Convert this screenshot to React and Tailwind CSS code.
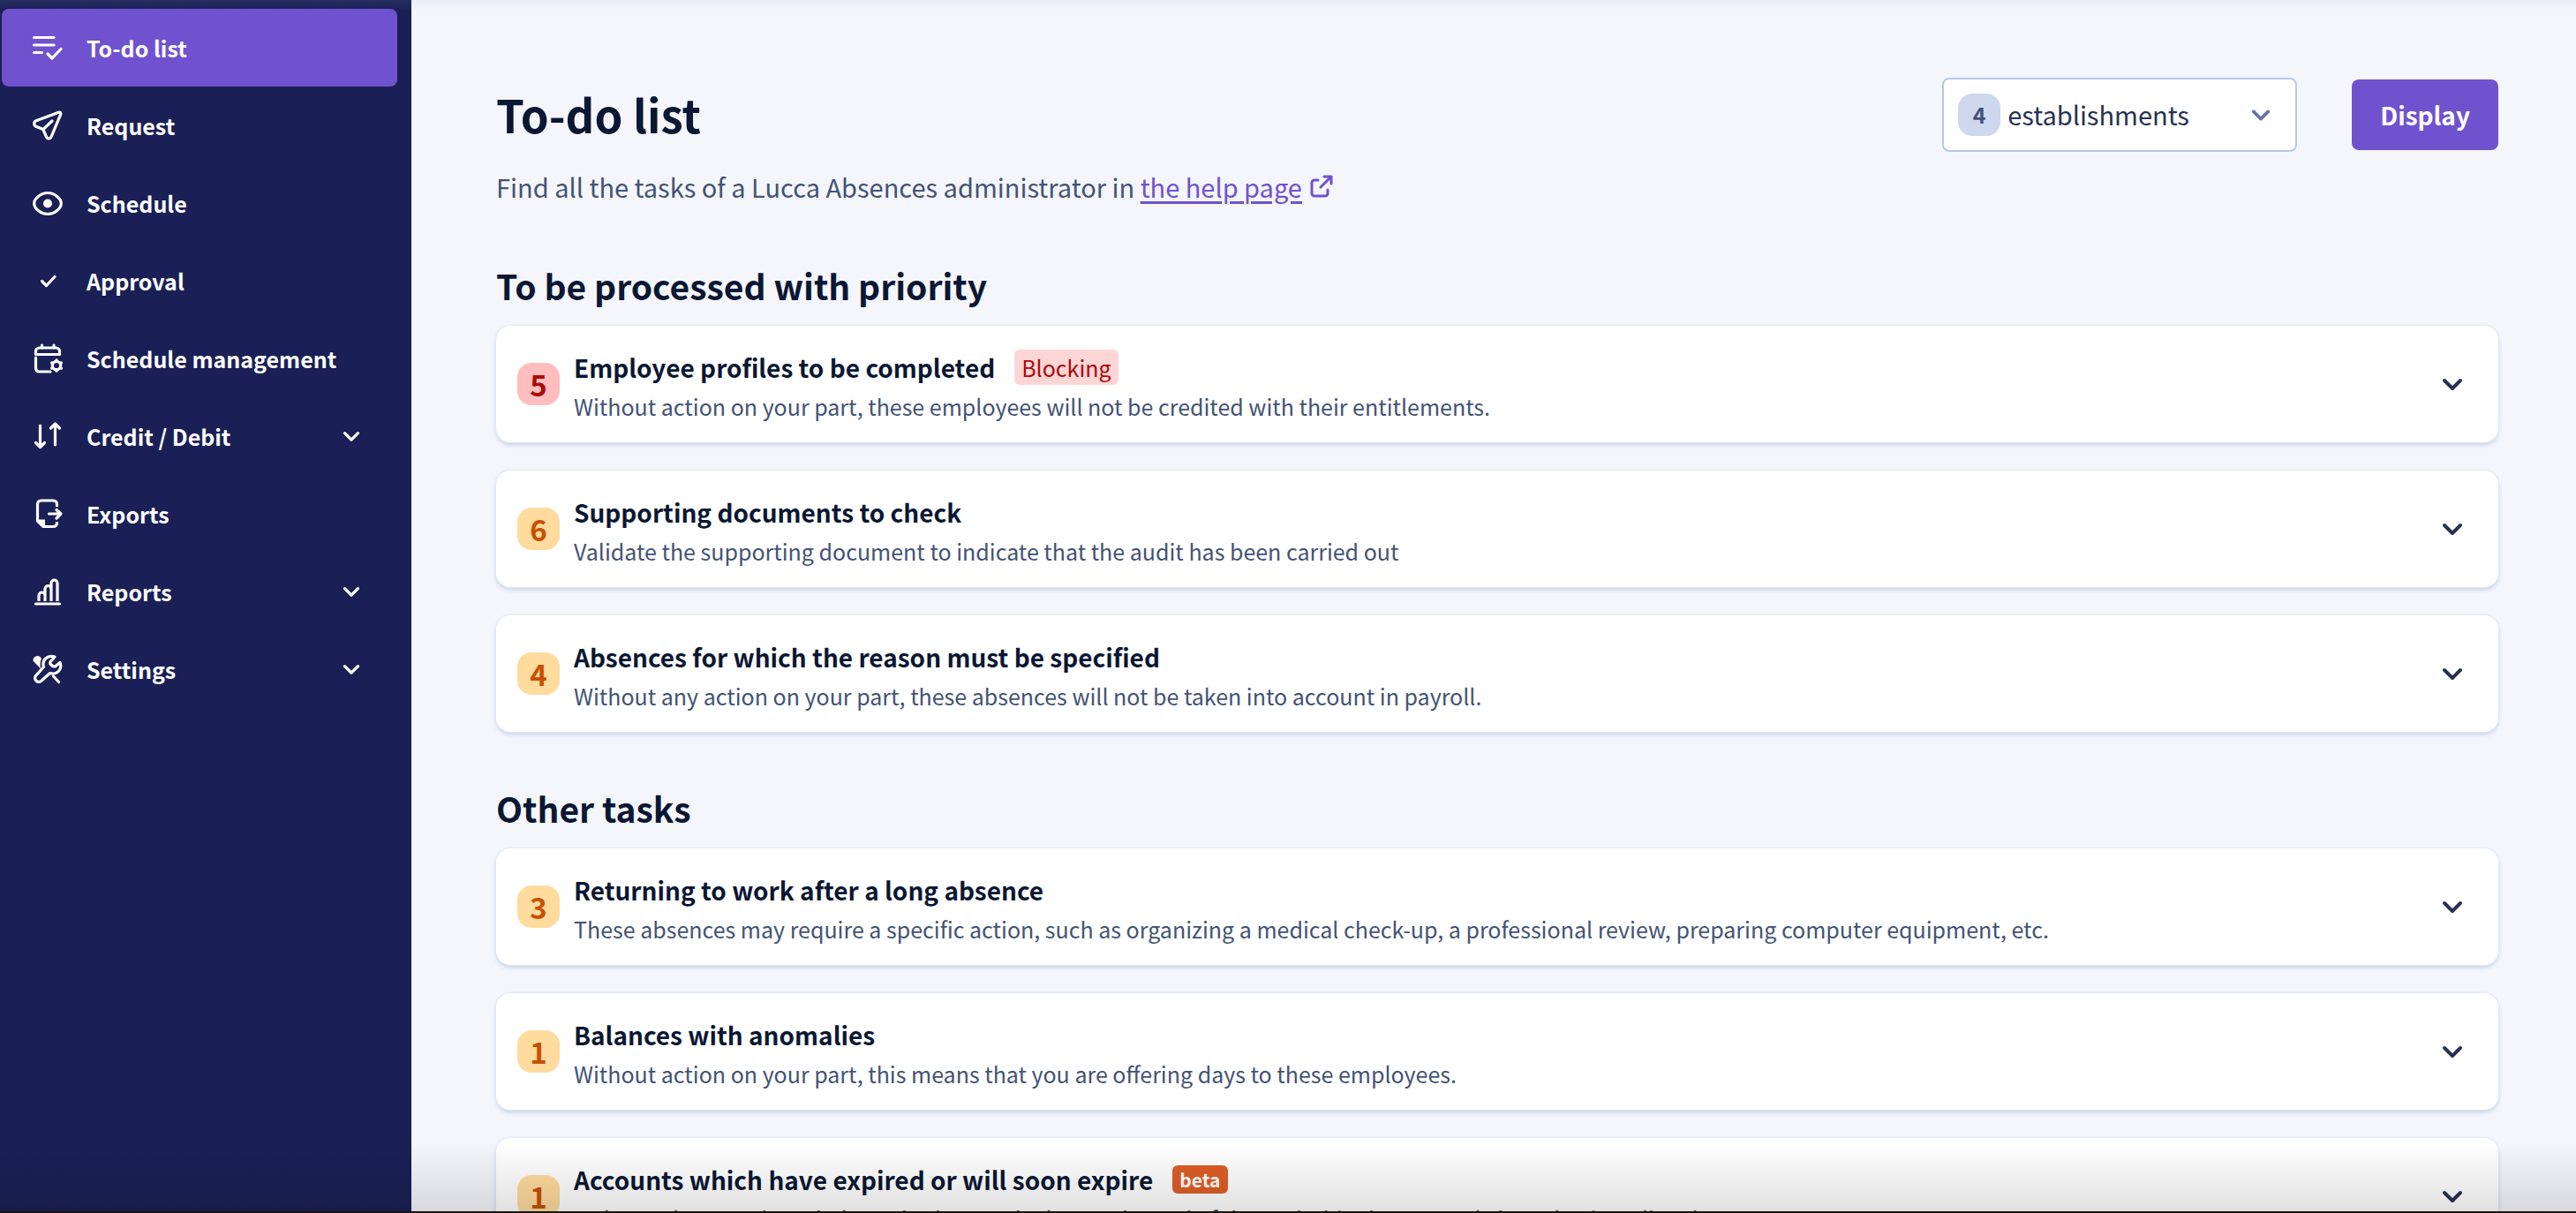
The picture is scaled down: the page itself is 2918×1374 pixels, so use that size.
import { useState } from 'react';

const navItems = [
  { label: 'To-do list', icon: 'todo', active: true },
  { label: 'Request', icon: 'send' },
  { label: 'Schedule', icon: 'eye' },
  { label: 'Approval', icon: 'check' },
  { label: 'Schedule management', icon: 'calendar' },
  { label: 'Credit / Debit', icon: 'arrows', expandable: true },
  { label: 'Exports', icon: 'export' },
  { label: 'Reports', icon: 'chart', expandable: true },
  { label: 'Settings', icon: 'tools', expandable: true }
];

const priorityTasks = [
  {
    count: 5,
    title: 'Employee profiles to be completed',
    text: 'Without action on your part, these employees will not be credited with their entitlements.',
    tag: 'Blocking'
  },
  {
    count: 6,
    title: 'Supporting documents to check',
    text: 'Validate the supporting document to indicate that the audit has been carried out'
  },
  {
    count: 4,
    title: 'Absences for which the reason must be specified',
    text: 'Without any action on your part, these absences will not be taken into account in payroll.'
  }
];

const otherTasks = [
  {
    count: 3,
    title: 'Returning to work after a long absence',
    text: 'These absences may require a specific action, such as organizing a medical check-up, a professional review, preparing computer equipment, etc.'
  },
  {
    count: 1,
    title: 'Balances with anomalies',
    text: 'Without action on your part, this means that you are offering days to these employees.'
  },
  {
    count: 1,
    title: 'Accounts which have expired or will soon expire',
    text: 'Only employees whose balance is about to be lost at the end of the period (or has recently been lost) are listed.',
    beta: true
  }
];

// Every icon is drawn on a 40x40 grid
const iconPaths = {
  todo: (
    <>
      <path d="M4.500 8.500h22.500M4.500 17h22.500M4.500 25.500h9" />
      <path d="m20 27 5 5 10-10.500" />
    </>
  ),
  send: (
    <>
      <path d="M32.500 5.200 7 14.800c-3 1.200-3 5.200-.2 6.500l8 3.200 3.600 8.300c1.200 2.800 4.800 2.600 5.800-.1l10.500-25c.6-1.600-.7-3.100-2.200-2.500Z" />
      <path d="m15 24.500 10-9.500" />
    </>
  ),
  eye: (
    <>
      <path d="M20 8.500c8 0 15.300 6.500 15.300 12s-7.300 12-15.300 12-15.300-6.500-15.300-12S12 8.500 20 8.500Z" />
      <circle cx="20" cy="20.500" r="5" fill="currentColor" stroke="none" />
    </>
  ),
  check: <path d="m13.500 20.500 5 5 9.500-10" />,
  calendar: (
    <>
      <path d="M6.500 15.500V12a4 4 0 0 1 4-4h19a4 4 0 0 1 4 4v3.500Z" />
      <path d="M6.500 19v12a4 4 0 0 0 4 4H23M13.500 5v3M27 5v3" />
      <circle cx="30" cy="28" r="4.700" />
      <path d="M30 21.800v1M30 33.200v1M24.600 24.900l1 .6M34.400 30.500l1 .6M24.600 31.100l1-.6M34.400 25.500l1-.6" />
    </>
  ),
  arrows: (
    <>
      <path d="M11.500 8v24M6.500 27.500l5 5 5-5" />
      <path d="M28.500 30V6.500M23.500 11l5-5 5 5" />
    </>
  ),
  export: (
    <>
      <path d="M30.500 12V9a4 4 0 0 0-4-4h-14a4 4 0 0 0-4 4v19l6.500 6.500h11.500a4 4 0 0 0 4-4V29" strokeLinecap="butt" />
      <path d="M8 26.500h9V35h-2Z" fill="currentColor" stroke="none" />
      <path d="M21.500 20H35M30 15.500l5 4.500-5 5" />
    </>
  ),
  chart: (
    <>
      <path d="M6.500 34h27" />
      <path d="M10 31v-6.500a3.500 3.500 0 0 1 7 0V31M17 31V17a3.500 3.500 0 0 1 7 0v14M24 31V10.500a3.500 3.500 0 0 1 7 0V31" strokeLinecap="butt" />
    </>
  ),
  tools: (
    <>
      <path d="M28 6C20 3.500 13 9.500 15.500 17.500l-9 10a4.300 4.300 0 0 0 6 6l10-9C30.500 27 37 20 34 12.500L28.500 17q-3.500 0-5.500-3-.5-2 .5-3Z" />
      <path d="M3.500 10.500A5 5 0 0 1 13 8c-1.500 3.500-1.800 6.500-1 11.500Z" fill="currentColor" stroke="none" />
      <path d="m26.500 28 6 6.500" />
    </>
  )
};

function NavIcon({ name }) {
  return (
    <svg
      viewBox="0 0 40 40"
      className="size-10 shrink-0"
      fill="none"
      stroke="currentColor"
      strokeWidth="3.200"
      strokeLinecap="round"
      strokeLinejoin="round"
      aria-hidden="true"
    >
      {iconPaths[name]}
    </svg>
  );
}

function Chevron({ className }) {
  return (
    <svg
      viewBox="0 0 24 24"
      className={className}
      fill="none"
      stroke="currentColor"
      strokeWidth="4"
      strokeLinecap="round"
      strokeLinejoin="round"
      aria-hidden="true"
    >
      <path d="m3 8 9 9 9-9" />
    </svg>
  );
}

function SideNav() {
  return (
    <nav className="w-[466px] shrink-0 bg-[#1a2056] pt-[10px] pr-4 pl-[2px] text-white">
      <ul>
        {navItems.map(item => (
          <li key={item.label}>
            <a
              href="#"
              aria-current={item.active ? 'page' : undefined}
              className={`flex h-[88px] items-center gap-6 rounded-lg pr-[42px] pl-8 text-[25px] leading-10 font-bold ${item.active ? 'bg-[#7052cf]' : ''}`}
            >
              <NavIcon name={item.icon} />
              <span className="flex-1">{item.label}</span>
              {item.expandable && <Chevron className="size-5" />}
            </a>
          </li>
        ))}
      </ul>
    </nav>
  );
}

function TaskCard({ task, danger }) {
  const [open, setOpen] = useState(false);

  return (
    <li>
      <button
        type="button"
        aria-expanded={open}
        onClick={() => setOpen(!open)}
        className="flex h-[132px] w-full items-center gap-4 rounded-2xl bg-white pr-10 pl-6 text-left shadow-[0_0_2px_1px_#e2e9f5,0_3px_5px_#c3cfe6]"
      >
        <span
          className={`flex size-12 shrink-0 items-center justify-center rounded-2xl text-[33px] leading-10 font-bold ${danger ? 'bg-[#ffbdbd] text-[#aa0a0a]' : 'bg-[#ffdb9e] text-[#c75000]'}`}
        >
          {task.count}
        </span>
        <span className="flex-1 pt-[2px]">
          <span className="flex h-12 items-center gap-[22px] text-[28px] leading-12 font-bold text-[#0b1733]">
            {task.title}
            {task.tag && (
              <span className="rounded-md bg-[#ffd6d6] px-2 text-[25px] leading-10 font-normal text-[#aa0a0a]">{task.tag}</span>
            )}
            {task.beta && (
              <span className="rounded-md bg-[#dd5e27] px-2 text-[21px] leading-8 font-bold text-white">beta</span>
            )}
          </span>
          <span className="block text-[25px] leading-10 text-[#435375]">{task.text}</span>
        </span>
        <Chevron className="size-6 text-[#263252]" />
      </button>
    </li>
  );
}

function TaskSection({ title, tasks, dangerFirst }) {
  return (
    <section>
      <h2 className="text-[39px] leading-12 font-bold text-[#0b1733]">{title}</h2>
      <ul className="mt-[22px] flex flex-col gap-8">
        {tasks.map((task, i) => (
          <TaskCard key={task.title} task={task} danger={dangerFirst && i === 0} />
        ))}
      </ul>
    </section>
  );
}

export default function App() {
  return (
    <div className="relative flex h-screen overflow-hidden bg-[#f4f6fc] font-['Noto_Sans_CJK_SC','Source_Sans_Pro',sans-serif]">
      <SideNav />

      <main className="min-w-0 flex-1 pt-[88px] pr-[88px] pl-24">
        <header className="flex items-center justify-between">
          <h1 className="pb-[2px] text-[51px] leading-20 font-bold text-[#0b1733]">To-do list</h1>
          <div className="flex items-center gap-[62px]">
            <button
              type="button"
              aria-haspopup="listbox"
              className="flex h-[84px] w-[402px] items-center gap-2 rounded-lg border-2 border-[#b9c7e4] bg-white pr-7 pl-4 text-[29px] text-[#263252]"
            >
              <span className="flex size-12 items-center justify-center rounded-2xl bg-[#cdd8ee] text-[25px] font-bold text-[#435375]">4</span>
              <span className="flex-1 text-left">establishments</span>
              <Chevron className="size-[22px] text-[#64759e]" />
            </button>
            <button type="button" className="h-20 rounded-lg bg-[#7052cf] px-8 text-[28px] font-bold text-white">
              Display
            </button>
          </div>
        </header>

        <p className="mt-4 text-[29px] leading-[46px] text-[#435375]">
          Find all the tasks of a Lucca Absences administrator in{' '}
          <a href="#" className="text-[#7052cf]">
            <span className="underline decoration-[3px] underline-offset-4">the help page</span>
            <svg
              viewBox="0 0 28 28"
              className="ml-2 inline size-7 align-[-2px]"
              fill="none"
              stroke="currentColor"
              strokeWidth="3"
              strokeLinecap="round"
              strokeLinejoin="round"
              aria-hidden="true"
            >
              <path d="M10 6H6a3 3 0 0 0-3 3v12a3 3 0 0 0 3 3h12a3 3 0 0 0 3-3v-4M17 2h8v8M25 2 13 14" />
            </svg>
          </a>
        </p>

        <div className="mt-[65px] flex flex-col gap-[62px]">
          <TaskSection title="To be processed with priority" tasks={priorityTasks} dangerFirst />
          <TaskSection title="Other tasks" tasks={otherTasks} />
        </div>
      </main>

      {/* Window edge shading */}
      <div className="pointer-events-none absolute inset-x-0 top-0 h-3 bg-gradient-to-b from-slate-400/10 to-transparent" />
      <div className="pointer-events-none absolute inset-x-0 bottom-0 h-20 border-b-2 border-[#1c1512] bg-gradient-to-b from-transparent to-black/12" />
    </div>
  );
}
